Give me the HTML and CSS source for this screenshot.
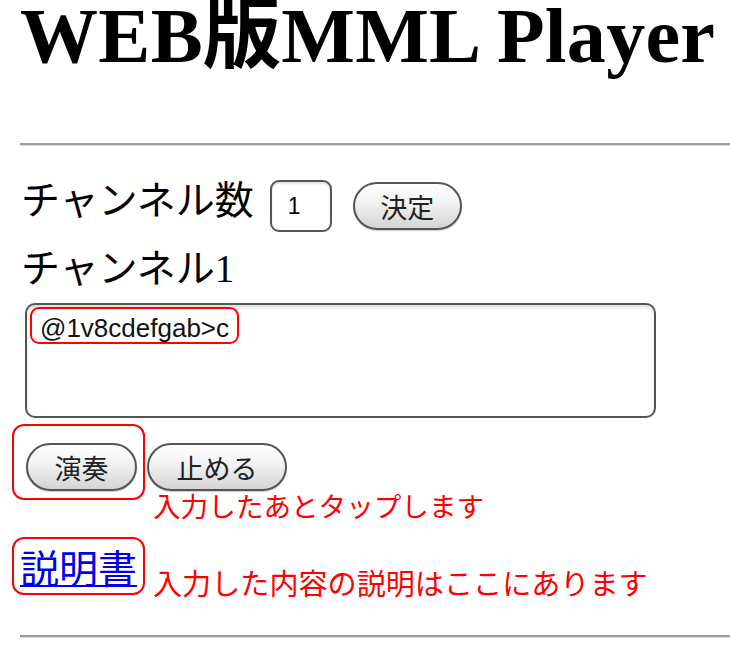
FILE: index.html
```html
<!DOCTYPE html>
<html lang="ja">
<head>
<meta charset="utf-8">
<title>WEB版MML Player</title>
<link rel="stylesheet" href="styles.css">
</head>
<body>
<h1 class="title">WEB版MML Player</h1>
<hr class="rule rule-top">
<div class="count-row">
  <span class="label">チャンネル数</span>
  <input class="count-input" type="text" value="1">
  <button class="pill btn-decide" type="button">決定</button>
</div>
<div class="label channel-label">チャンネル1</div>
<div class="editor">
  <textarea class="mml">@1v8cdefgab&gt;c</textarea>
  <span class="mark mark-text"></span>
</div>
<div class="controls">
  <span class="play-wrap"><button class="pill btn-play" type="button">演奏</button><span class="mark mark-play"></span></span>
  <button class="pill btn-stop" type="button">止める</button>
</div>
<p class="note note-tap">入力したあとタップします</p>
<div class="help-row">
  <span class="help-wrap"><a class="help-link" href="#">説明書</a><span class="mark mark-help"></span></span>
  <span class="note note-help">入力した内容の説明はここにあります</span>
</div>
<hr class="rule rule-bottom">
</body>
</html>
```
FILE: styles.css
```css
html { background: #fff; }
body {
  margin: 0;
  padding: 0 0 0 20px;
  background: #fff;
  color: #000;
  font-family: "Liberation Serif", "Noto Sans CJK JP", serif;
}
.title {
  margin: 0;
  font-size: 78px;
  line-height: 72px;
  font-weight: bold;
  white-space: nowrap;
  letter-spacing: 0.3px;
}
.rule {
  height: 0;
  margin: 0;
  border: 0;
  border-top: 2px solid #9c9c9c;
  border-bottom: 1px solid #dcdcdc;
}
.rule-top { margin-top: 71px; }
.rule-bottom { margin-top: 38px; }

.label {
  font-size: 39px;
  line-height: 38px;
  white-space: nowrap;
}
.count-row {
  display: flex;
  align-items: flex-start;
  gap: 16px;
  margin-top: 34px;
  padding-left: 1px;
  height: 52px;
}
.count-row .label { margin-top: 2px; }
.count-input {
  box-sizing: border-box;
  width: 62px;
  height: 52px;
  margin: 0;
  padding: 0 0 0 16px;
  border: 2px solid #555;
  border-radius: 9px;
  font: 23px "Liberation Sans", sans-serif;
  color: #000;
  background: #fff;
  box-shadow: inset 0 2px 2px rgba(0, 0, 0, 0.12);
  outline: none;
}
.pill {
  box-sizing: border-box;
  height: 48px;
  margin: 0;
  padding: 0;
  border: 2px solid #555;
  border-radius: 24px;
  background: linear-gradient(#ffffff 0%, #f1f1f1 45%, #d4d4d4 100%);
  box-shadow: 0 1px 1px rgba(0, 0, 0, 0.2);
  font: 27px/1 "Noto Sans CJK JP", sans-serif;
  color: #222;
}
.btn-decide { width: 109px; margin-top: 2px; margin-left: 5px; }
.channel-label { margin-top: 18px; padding-left: 1px; }

.editor {
  position: relative;
  width: 631px;
  margin: 15px 0 0 5px;
}
.mml {
  display: block;
  box-sizing: border-box;
  width: 631px;
  height: 115px;
  margin: 0;
  padding: 8px 13px;
  border: 2px solid #555;
  border-radius: 10px;
  font: 26px "Liberation Sans", sans-serif;
  line-height: normal;
  color: #111;
  background: #fff;
  resize: none;
  outline: none;
  box-shadow: inset 0 3px 3px rgba(0, 0, 0, 0.12);
}
.mark {
  position: absolute;
  box-sizing: border-box;
  border: 2px solid #f00;
  border-radius: 9px;
  pointer-events: none;
}
.mark-text { left: 5px; top: 4px; width: 209px; height: 37px; }

.controls {
  display: flex;
  gap: 10px;
  margin: 25px 0 0 6px;
}
.play-wrap { position: relative; display: flex; }
.btn-play { width: 111px; }
.btn-stop { width: 140px; }
.mark-play { left: -14px; top: -19px; width: 133px; height: 76px; border-radius: 12px; }

.note {
  color: #f00;
  font-family: "Noto Sans CJK JP", sans-serif;
  white-space: nowrap;
}
.note-tap {
  margin: 3px 0 0 133px;
  font-size: 27.6px;
  line-height: 22px;
}
.help-row {
  display: flex;
  align-items: flex-start;
  margin-top: 30px;
}
.help-wrap { position: relative; }
.help-link {
  display: block;
  font-family: "Noto Sans CJK JP", sans-serif;
  font-size: 39px;
  line-height: 40px;
  color: #00e;
  text-decoration: underline;
  text-decoration-thickness: 2px;
  text-underline-offset: 2px;
}
.mark-help { left: -8px; top: -9px; width: 133px; height: 58px; border-radius: 12px; }
.note-help {
  margin: 22px 0 0 16px;
  font-size: 29.1px;
  line-height: 29px;
}
```
